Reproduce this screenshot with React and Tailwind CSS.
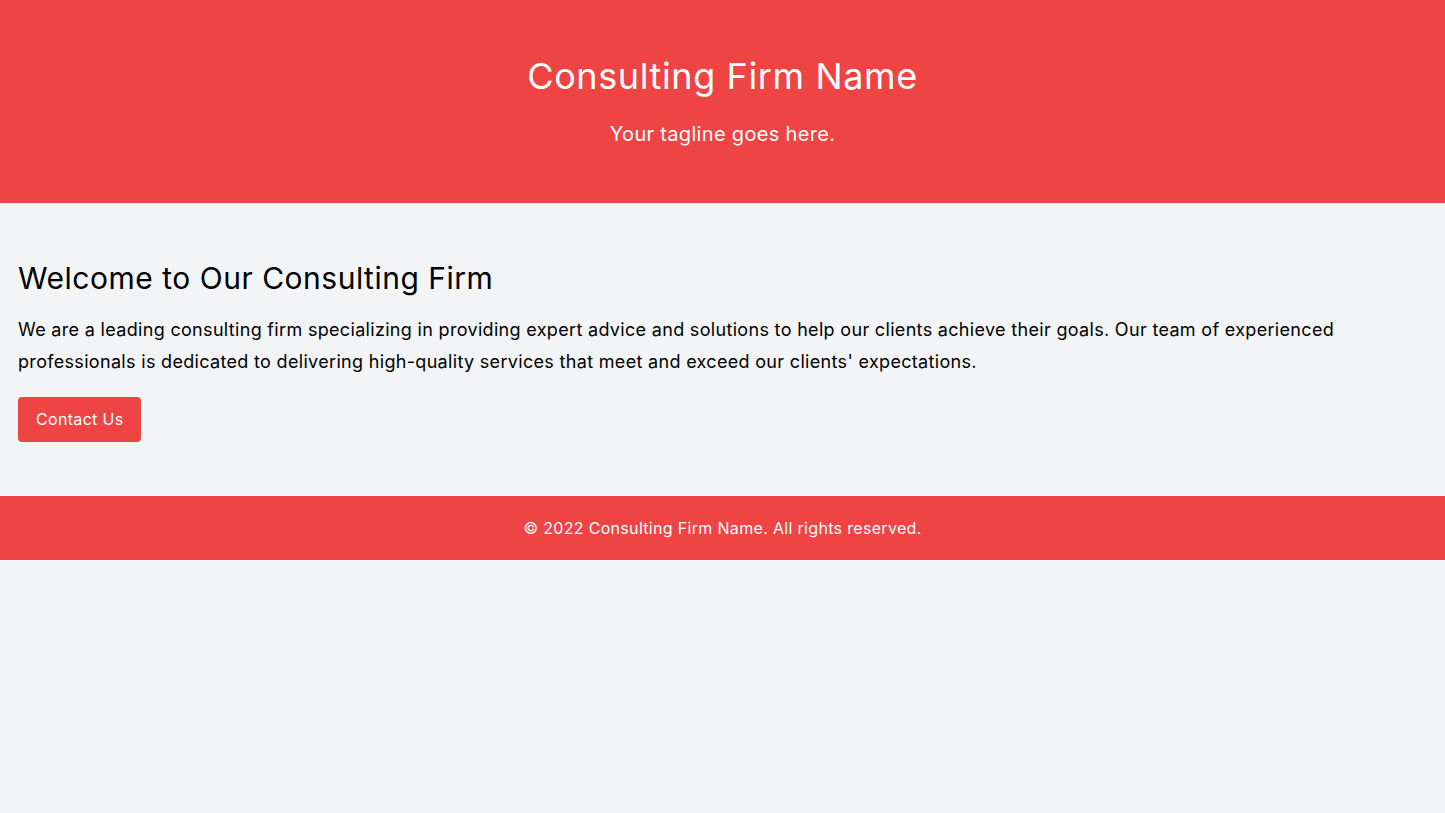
export default function App() {
  return (
    <div className="min-h-screen bg-[#f3f4f6] text-black tracking-[0.02em]" style={{ fontFamily: 'Inter, sans-serif' }}>
      <header className="bg-[#ef4444] text-white pt-14 pb-[55px] text-center">
        <h1 className="text-4xl tracking-[0.017em]">Consulting Firm Name</h1>
        <p className="mt-6 text-xl">Your tagline goes here.</p>
      </header>
      <main className="px-[18px] pt-[57px] pb-[54px]">
        <h2 className="text-3xl tracking-[0.017em] mb-[18px]">Welcome to Our Consulting Firm</h2>
        <p className="text-lg leading-8 mb-[19px]">
          We are a leading consulting firm specializing in providing expert advice and solutions to help our clients achieve their goals. Our team of experienced professionals is dedicated to delivering high-quality services that meet and exceed our clients' expectations.
        </p>
        <button className="bg-[#ef4444] text-white px-[18px] py-2 rounded text-base leading-[29px]">Contact Us</button>
      </main>
      <footer className="bg-[#ef4444] text-white text-center py-5">
        <p>© 2022 Consulting Firm Name. All rights reserved.</p>
      </footer>
    </div>
  );
}
